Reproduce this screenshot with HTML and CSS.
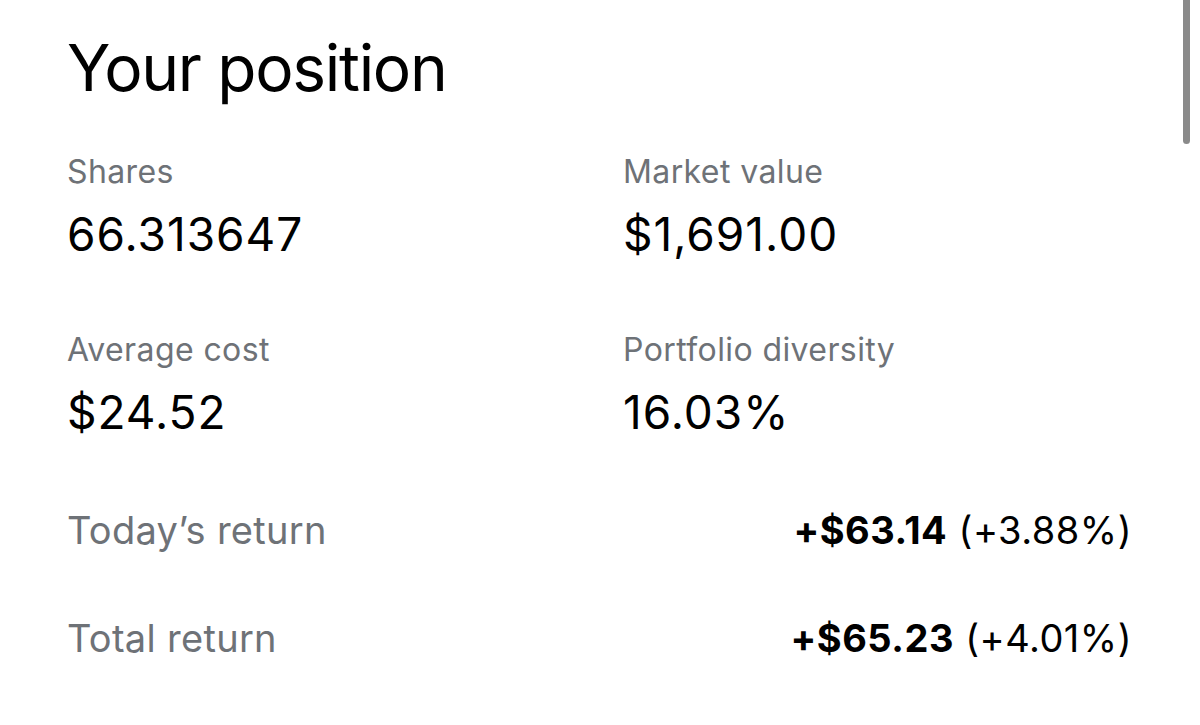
FILE: index.html
```html
<!DOCTYPE html>
<html lang="en">
<head>
<meta charset="utf-8">
<title>Your position</title>
<link rel="stylesheet" href="styles.css">
</head>
<body>
<div class="scrollbar"></div>
<main class="position">
  <h1 class="title">Your position</h1>
  <div class="stats">
    <div class="stat">
      <div class="label">Shares</div>
      <div class="value">66.313647</div>
    </div>
    <div class="stat">
      <div class="label">Market value</div>
      <div class="value">$1,691.00</div>
    </div>
    <div class="stat">
      <div class="label">Average cost</div>
      <div class="value">$24.52</div>
    </div>
    <div class="stat">
      <div class="label">Portfolio diversity</div>
      <div class="value">16.03%</div>
    </div>
  </div>
  <div class="returns">
    <div class="return-row">
      <span class="return-label">Today’s return</span>
      <span class="return-value"><b>+$63.14</b> (+3.88%)</span>
    </div>
    <div class="return-row">
      <span class="return-label">Total return</span>
      <span class="return-value"><b>+$65.23</b> (+4.01%)</span>
    </div>
  </div>
</main>
</body>
</html>
```
FILE: styles.css
```css
* { box-sizing: border-box; }
html, body {
  margin: 0;
  padding: 0;
  background: #ffffff;
  width: 1200px;
  height: 725px;
  overflow: hidden;
}
body {
  font-family: Inter, "Noto Sans", "Liberation Sans", sans-serif;
  color: #000;
  position: relative;
}
.scrollbar {
  position: absolute;
  top: 0;
  right: 10px;
  width: 7px;
  height: 144px;
  background: #8a8a8a;
  border-radius: 0 0 4px 4px;
}
.position {
  padding: 0 68px 0 67px;
}
.title {
  margin: 0;
  padding-top: 30px;
  font-size: 64px;
  font-weight: 400;
  line-height: 76px;
  letter-spacing: -1.3px;
}
.stats {
  display: grid;
  grid-template-columns: 556px 1fr;
  row-gap: 72px;
  margin-top: 48px;
}
.label {
  font-size: 32px;
  line-height: 36px;
  color: #6e7277;
  letter-spacing: 0.4px;
}
.value {
  margin-top: 18px;
  font-size: 46px;
  line-height: 52px;
  letter-spacing: 1px;
}
.returns {
  margin-top: 70px;
  display: flex;
  flex-direction: column;
  gap: 64px;
}
.return-row {
  display: flex;
  justify-content: space-between;
  align-items: baseline;
  font-size: 38px;
  line-height: 44px;
}
.return-label { color: #6e7277; letter-spacing: 0.3px; }
.return-value { letter-spacing: 0.5px; }
.return-value b { font-weight: 700; }
```
